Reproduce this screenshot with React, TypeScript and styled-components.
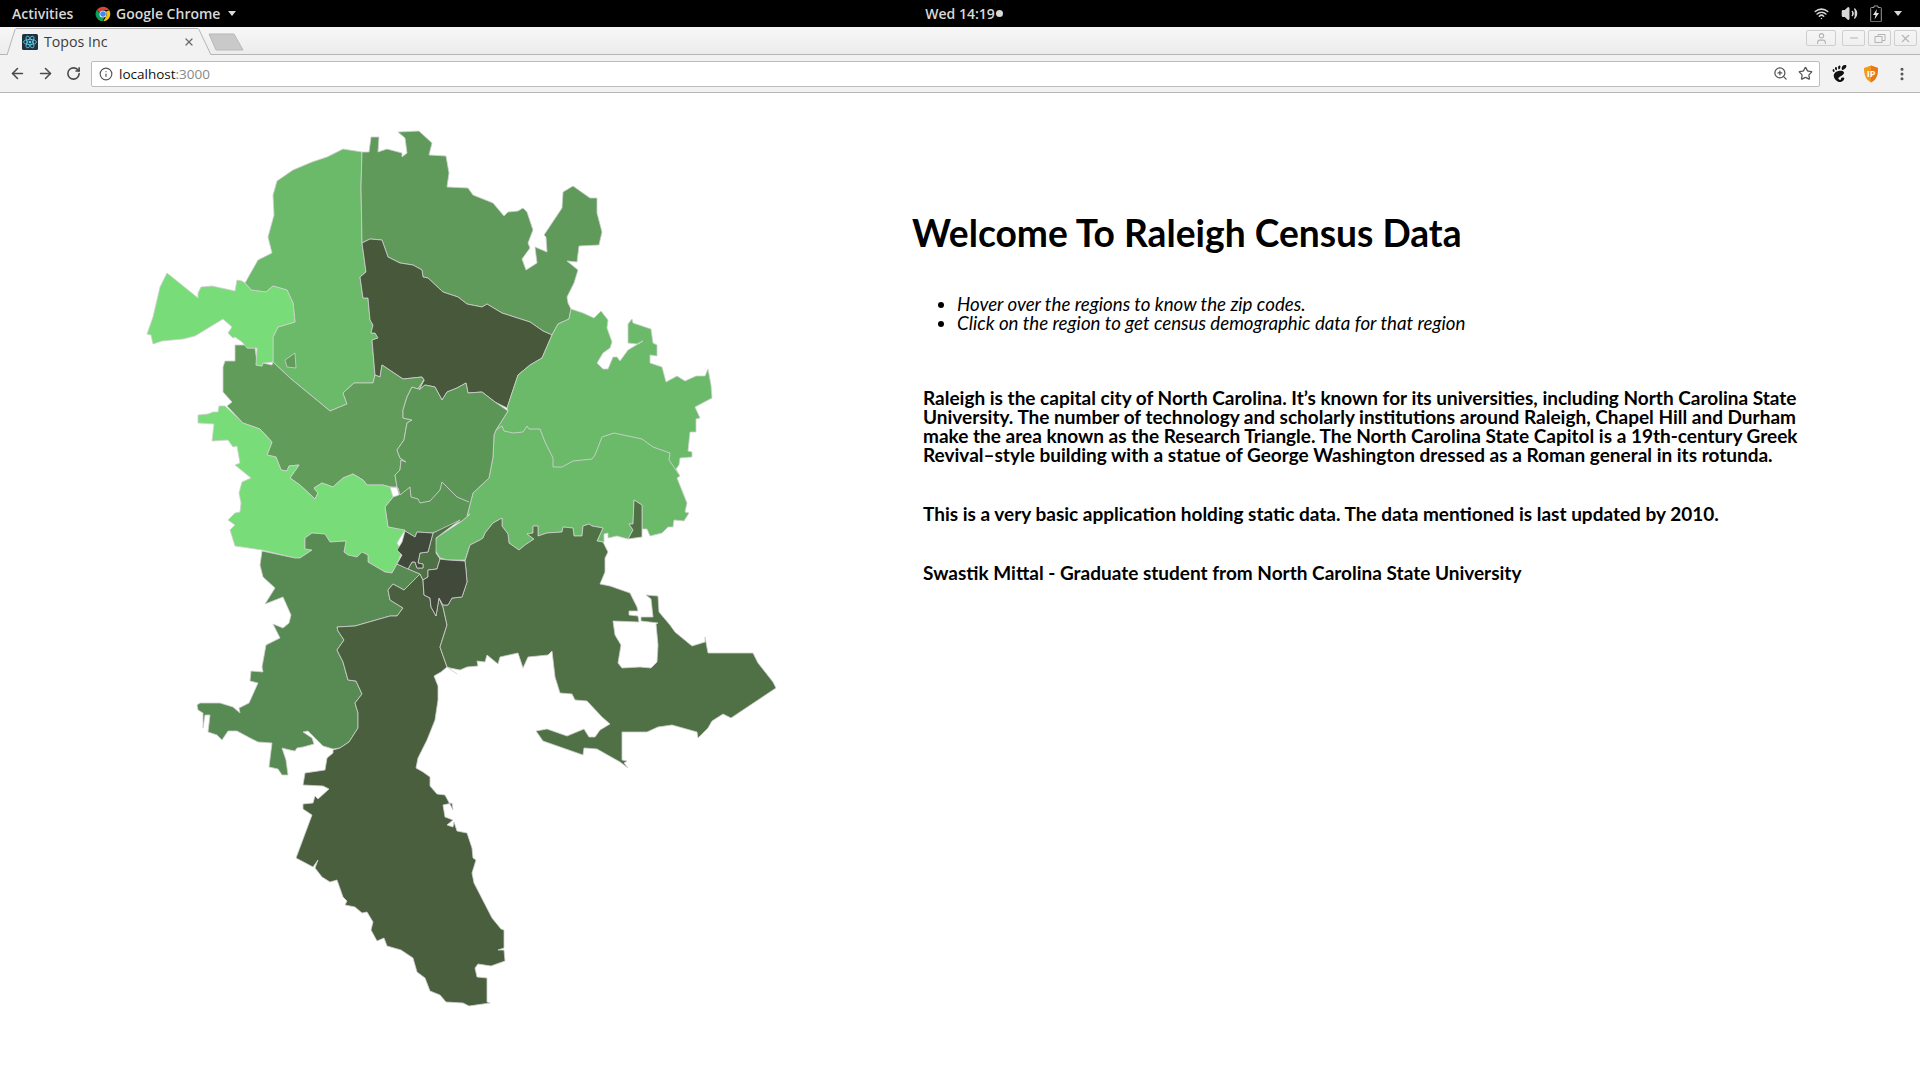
import styled, { createGlobalStyle } from "styled-components";
import {
  ArrowLeft,
  ArrowRight,
  RotateCw,
  Info,
  ZoomIn,
  Star,
  MoreVertical,
  Wifi,
  Volume2,
  X,
  Minus,
  User,
} from "lucide-react";
import { SiGnome } from "react-icons/si";

// region outlines, in page pixels (the svg viewBox starts right below the browser chrome)
const regions = [
  {
    zip: "27617",
    fill: "#6aba6a",
    points:
      "362,152 343,149 327,157 312,162 293,170 277,181 273,195 274,215 268,237 272,253 258,260 245,283 251,290 266,292 273,286 287,290 293,303 295,322 278,327 273,337 273,362 290,378 330,411 342,406 347,404 343,393 354,383 373,383 375,375 372,340 378,338 375,333 371,333 373,325 370,320 368,298 363,298 360,277 366,272 362,243 361,187",
  },
  {
    zip: "27614",
    fill: "#5f9a5a",
    points:
      "362,152 369,152 371,137 379,137 378,152 387,149 402,153 402,157 407,153 405,138 398,132 419,131 432,143 429,155 446,156 449,173 447,187 468,188 473,195 493,203 504,216 508,212 518,211 523,208 527,212 533,230 528,243 530,248 522,259 526,270 537,263 535,247 547,252 546,237 544,235 562,208 563,192 573,186 590,198 597,198 597,213 602,232 599,245 579,246 577,262 567,261 578,270 574,283 567,297 568,303 571,309 569,319 558,324 552,335 543,331 530,322 502,313 487,304 482,307 467,304 458,297 443,292 428,278 423,277 422,270 413,265 400,263 388,257 382,240 370,239 362,243 361,187",
  },
  {
    zip: "27615",
    fill: "#47593a",
    points:
      "362,243 370,239 382,240 388,257 400,263 413,265 422,270 423,277 428,278 443,292 458,297 467,304 482,307 487,304 502,313 530,322 543,331 552,335 542,358 530,365 518,375 507,408 495,402 482,392 468,393 466,383 457,388 447,392 442,400 435,387 425,385 419,390 424,380 422,377 403,379 382,365 380,377 375,375 372,340 378,338 375,333 371,333 373,325 370,320 368,298 363,298 360,277 366,272",
  },
  {
    zip: "27616",
    fill: "#6aba6a",
    points:
      "571,309 583,313 594,318 601,311 608,320 607,328 612,342 610,348 603,353 597,363 603,369 608,369 613,357 617,357 620,361 628,350 643,341 637,344 628,343 628,324 632,319 633,323 651,329 653,343 657,345 657,356 650,355 650,363 662,367 666,382 677,376 685,381 696,376 705,376 708,369 711,385 712,398 695,407 700,418 696,419 696,432 690,432 688,451 692,452 692,457 680,458 679,465 676,469 680,476 677,478 687,503 685,512 689,513 684,521 674,520 673,527 668,527 662,533 650,536 647,529 642,529 642,505 634,500 633,524 629,524 633,530 628,539 617,536 608,538 608,533 604,534 604,542 597,541 603,528 592,526 589,524 583,526 582,536 574,536 573,528 563,527 562,532 547,533 538,536 538,526 533,526 533,533 527,534 534,539 525,545 519,550 509,543 508,534 502,526 502,518 493,523 485,533 483,538 480,540 470,545 465,560 448,560 440,558 435,550 436,538 462,521 470,514 467,516 473,493 489,478 493,457 494,435 496,430 508,411 507,408 518,375 530,365 542,358 552,335 558,324 569,319",
  },
  {
    zip: "27604",
    fill: "#619c5b",
    points:
      "235,345 247,345 247,348 255,348 257,362 256,365 262,366 263,363 272,365 273,362 290,378 330,411 342,406 347,404 343,393 354,383 373,383 375,375 380,377 382,365 403,379 422,377 424,380 418,389 412,387 407,397 403,410 403,418 412,420 407,423 404,440 397,450 400,458 406,462 401,460 400,470 395,475 397,487 390,487 383,485 367,485 363,480 353,474 343,478 333,487 322,483 314,488 318,493 315,499 300,485 290,478 299,465 289,466 287,471 281,470 276,457 267,455 272,442 260,429 243,423 227,406 232,402 223,392 223,380 223,367 225,361 235,361",
  },
  {
    zip: "27613",
    fill: "#5c9657",
    points:
      "424,380 418,389 412,387 407,397 403,410 403,418 412,420 407,423 404,440 397,450 400,458 406,462 401,460 400,470 395,475 397,487 399,495 393,497 385,507 388,527 405,531 415,537 417,532 433,533 462,521 470,514 467,516 473,493 489,478 493,457 494,435 496,430 508,411 495,402 482,392 468,393 466,383 457,388 447,392 442,400 435,387 425,385 419,390",
  },
  {
    zip: "27612",
    fill: "#78dd78",
    points:
      "167,273 198,298 198,293 201,287 212,286 235,291 237,280 242,281 245,283 251,290 266,292 273,286 287,290 293,303 295,322 278,327 273,337 273,362 263,363 262,366 256,365 257,348 255,348 247,348 242,342 235,337 233,338 228,333 232,327 223,319 195,336 183,339 162,341 153,344 151,335 147,334 153,317 160,287",
  },
  {
    zip: "27607",
    fill: "#78dd78",
    points:
      "198,415 208,414 213,412 218,412 219,406 225,406 240,420 243,423 260,429 272,442 267,455 276,457 281,470 287,471 289,466 299,465 290,478 300,485 315,499 318,493 314,488 322,483 333,487 343,478 353,474 363,480 367,485 383,485 390,487 393,497 385,507 388,527 405,530 397,543 402,552 397,564 392,573 385,572 368,562 368,555 362,552 357,557 348,555 344,552 346,541 330,542 325,534 312,533 305,538 305,549 312,550 300,558 295,558 262,550 235,546 230,530 235,525 228,520 235,513 240,512 241,503 239,493 242,482 251,478 235,465 240,463 237,446 233,447 228,440 212,441 214,424 198,423",
  },
  {
    zip: "27606",
    fill: "#588a53",
    points:
      "262,551 260,565 263,577 275,588 265,604 283,597 291,615 289,623 283,628 273,624 280,638 266,645 262,667 263,672 251,671 250,681 258,683 249,703 239,708 240,713 233,707 220,703 200,703 197,705 198,710 203,713 203,728 205,715 210,715 208,732 217,735 222,740 228,731 237,731 250,738 258,742 272,743 269,767 278,769 282,775 288,775 286,760 282,748 290,750 295,751 297,748 303,747 314,744 312,738 303,732 308,731 323,746 333,749 340,748 349,742 358,728 358,713 355,703 362,694 356,681 348,680 343,662 337,650 344,640 338,631 337,627 355,626 390,616 397,616 403,608 390,600 388,590 393,584 404,590 420,574 397,564 392,573 385,572 368,562 368,555 362,552 357,557 348,555 344,552 346,541 330,542 325,534 312,533 305,538 305,549 312,550 300,558 295,558",
  },
  {
    zip: "27603",
    fill: "#4a5f3d",
    points:
      "420,574 404,590 393,584 388,590 390,600 403,608 397,616 390,616 355,626 337,627 338,631 344,640 337,650 343,662 348,680 356,681 362,694 355,703 358,713 358,728 349,742 340,748 333,750 333,753 327,758 325,770 305,773 303,785 323,786 329,789 318,799 315,796 313,803 303,804 303,809 312,815 296,858 313,867 318,860 315,868 322,877 330,882 337,880 343,897 347,901 345,905 355,907 362,913 367,912 373,922 371,930 377,941 384,938 387,946 401,950 413,958 417,972 425,978 430,991 440,995 446,1002 463,1003 469,1006 490,1003 487,1002 487,978 477,977 475,968 478,964 491,966 505,961 504,950 498,950 504,948 504,930 501,929 492,918 474,883 472,873 476,860 473,858 472,848 467,833 457,831 454,822 453,827 447,825 453,820 445,817 443,805 452,803 453,810 445,795 437,794 430,786 430,777 423,772 416,768 418,758 427,740 435,720 438,700 438,686 434,676 441,672 447,667 440,647 447,625 443,607 439,598 436,616 431,607 430,598 424,595 423,580",
  },
  {
    zip: "27610",
    fill: "#507146",
    points:
      "465,561 470,545 480,540 483,538 485,533 493,523 502,518 502,526 508,534 509,543 519,550 525,545 534,539 527,534 533,533 533,526 538,526 538,536 547,533 562,532 563,527 573,528 574,536 582,536 583,526 589,524 592,526 603,528 597,541 603,542 608,552 605,558 605,572 600,584 610,586 630,593 637,607 638,611 629,611 629,615 638,616 639,622 613,621 615,635 621,645 618,663 622,668 640,667 651,668 657,662 658,645 656,624 658,623 641,621 641,617 653,617 651,599 646,595 658,596 659,612 670,625 675,632 692,646 705,642 705,637 708,653 753,653 758,663 773,682 776,688 731,718 723,714 712,721 708,728 698,738 697,732 672,725 658,727 647,732 622,732 622,760 627,761 624,763 628,768 620,762 597,749 584,748 583,755 543,741 536,731 547,729 567,736 584,729 589,737 595,737 600,730 610,724 602,717 587,701 575,700 572,694 560,693 555,677 552,651 548,655 528,657 523,668 518,653 500,657 498,664 487,655 485,662 477,661 478,666 467,667 460,670 450,668 447,667 440,647 447,625 443,607 439,598 443,605 448,605 452,598 462,597 467,582 466,570",
  },
  {
    zip: "27610",
    fill: "#507146",
    points: "628,539 633,530 629,524 633,524 634,500 642,505 642,537",
  },
  {
    zip: "27601",
    fill: "#4f7045",
    points:
      "433,533 460,520 436,538 436,553 440,559 437,569 428,570 428,577 423,580 420,574 408,569 412,562 415,562 417,568 423,568 423,564 418,563 420,553 428,552",
  },
  {
    zip: "27605",
    fill: "#40493a",
    points:
      "405,531 415,537 417,532 433,533 428,552 420,553 418,563 423,564 423,568 417,568 415,562 412,562 408,569 397,564 402,555 397,550 402,542",
  },
  {
    zip: "27608",
    fill: "#40493a",
    points:
      "440,559 448,560 465,561 466,570 467,582 462,597 452,598 448,605 443,605 439,598 436,616 431,607 430,598 424,595 423,580 428,577 428,570 437,569",
  },
  {
    zip: "27609",
    fill: "#619c5b",
    points: "285,360 295,353 296,368 287,367",
  },
];

// borders between neighbouring regions of the same green
const borders = [
  "496,430 502,426 504,431 513,433 523,432 527,426 529,429 540,429 545,442 553,458 553,467 562,467 573,461 592,459 595,455 602,437 614,433 642,439 653,447 670,453 669,460 680,476",
  "390,487 398,488 400,495 410,487 411,497 418,499 420,503 430,501 440,490 442,482 457,497 469,502",
  "447,667 457,674",
];

const GlobalStyle = createGlobalStyle`
  html, body {
    margin: 0;
    height: 100%;
    overflow: hidden;
    background: #fff;
  }
`;

const Page = styled.div`
  display: flex;
  flex-direction: column;
  width: 1920px;
  height: 1080px;
`;

const TopBar = styled.div`
  display: grid;
  grid-template-columns: 1fr auto 1fr;
  align-items: center;
  height: 27px;
  background: #000;
  color: #d8d8d8;
  font-family: "Open Sans", sans-serif;
  font-size: 14px;
  font-weight: 600;
`;

const TopLeft = styled.div`
  display: flex;
  align-items: center;
  padding-left: 12px;
`;

const Activities = styled.span`
  width: 83px;
`;

const AppName = styled.span`
  margin: 0 8px 0 5px;
`;

const Caret = styled.span`
  width: 0;
  height: 0;
  border-left: 4.5px solid transparent;
  border-right: 4.5px solid transparent;
  border-top: 5px solid #d8d8d8;
`;

const Clock = styled.span`
  display: flex;
  align-items: center;
  gap: 1px;
  margin-left: 8px;
`;

const ClockDot = styled.span`
  width: 7px;
  height: 7px;
  border-radius: 50%;
  background: #d8d8d8;
`;

const TopRight = styled.div`
  display: flex;
  align-items: center;
  justify-content: flex-end;
  gap: 12px;
  padding-right: 18px;
`;

const TabRow = styled.div`
  display: flex;
  align-items: flex-end;
  justify-content: space-between;
  height: 28px;
  background: linear-gradient(#f7f7f7, #ececec);
  border-bottom: 1px solid #b5b5b5;
  box-sizing: border-box;
  padding-left: 7px;
`;

const Tabs = styled.div`
  display: flex;
  align-items: flex-end;
`;

const Tab = styled.div`
  position: relative;
  display: flex;
  align-items: center;
  width: 204px;
  height: 27px;
  margin-bottom: -1px;
  padding: 0 16px 0 15px;
  box-sizing: border-box;
  color: #3c3c3c;
  font-family: "Open Sans", sans-serif;
  font-size: 14.2px;
`;

const TabShape = styled.svg`
  position: absolute;
  left: 0;
  top: 0;
`;

const TabTitle = styled.span`
  position: relative;
  flex: 1;
  margin-left: 6px;
`;

const TabClose = styled.span`
  position: relative;
  display: flex;
  color: #6a6a6a;
`;

const Favicon = styled.svg`
  position: relative;
  display: block;
`;

const NewTab = styled.svg`
  display: block;
  margin: 0 0 3px -3px;
`;

const WindowButtons = styled.div`
  display: flex;
  align-self: flex-start;
  gap: 3px;
  padding: 3px 3px 0 0;
`;

const WindowButton = styled.div<{ $wide?: boolean }>`
  display: flex;
  align-items: center;
  justify-content: center;
  width: ${(p) => (p.$wide ? "30px" : "23px")};
  height: 16px;
  margin-right: ${(p) => (p.$wide ? "3px" : "0")};
  border: 1px solid #cfcfcf;
  border-radius: 2px;
  box-sizing: border-box;
  color: #b4b4b4;
`;

const Toolbar = styled.div`
  display: flex;
  align-items: center;
  height: 38px;
  background: #f2f2f2;
  border-bottom: 1px solid #b5b5b5;
  box-sizing: border-box;
  padding: 0 10px 0 3px;
`;

const NavButton = styled.span`
  display: flex;
  justify-content: center;
  width: 28px;
  color: #4a4a4a;
`;

const AddressBar = styled.div`
  flex: 1;
  display: flex;
  align-items: center;
  height: 26px;
  margin: 0 11px 0 4px;
  padding: 0 6px 0 7px;
  background: #fff;
  border: 1px solid #bdbdbd;
  border-radius: 2px;
  box-sizing: border-box;
  color: #555;
`;

const Url = styled.span`
  flex: 1;
  margin-left: 6px;
  font-family: "Open Sans", sans-serif;
  font-size: 13.5px;
  color: #111;
`;

const Port = styled.span`
  color: #888;
`;

const BarIcons = styled.div`
  display: flex;
  align-items: center;
  gap: 10px;
`;

const Extensions = styled.div`
  display: flex;
  align-items: center;
  gap: 15px;
  color: #111;
`;

const Main = styled.main`
  flex: 1;
  display: flex;
  min-height: 0;
`;

const MapPane = styled.div`
  flex: 0 0 912px;
`;

const MapSvg = styled.svg`
  display: block;
`;

const Region = styled.polygon`
  stroke: #cfcfcf;
  stroke-width: 0.8;
  stroke-linejoin: round;
  cursor: pointer;
`;

const Border = styled.polyline`
  fill: none;
  stroke: #cfcfcf;
  stroke-width: 0.9;
  stroke-linejoin: round;
`;

const TextPane = styled.div`
  flex: 1;
  padding-top: 122px;
  font-family: "Lato", sans-serif;
  color: #000;
`;

const Title = styled.h1`
  margin: 0;
  font-size: 37.2px;
  line-height: 36px;
  font-weight: 700;
`;

const Hints = styled.ul`
  margin: 44px 0 55px;
  padding-left: 45px;
  font-size: 18.7px;
  line-height: 19px;
  font-style: italic;
`;

const Paragraph = styled.p`
  margin: 0 0 40px 11px;
  width: 880px;
  font-size: 19px;
  line-height: 19px;
  font-weight: 700;
`;

function ChromeLogo() {
  return (
    <svg width="16" height="16" viewBox="0 0 24 24">
      <path d="M12 1a11 11 0 0 1 9.5 5.5H12a5.5 5.5 0 0 0-5.2 3.7L3.4 5A11 11 0 0 1 12 1z" fill="#db4437" />
      <path d="M21.5 6.5A11 11 0 0 1 12.5 23l4.2-7.5A5.5 5.5 0 0 0 16 8.500z" fill="#f4c20d" />
      <path d="M3.4 5l4.400 7.800a5.500 5.500 0 0 0 6 4.400L11.800 23A11 11 0 0 1 3.400 5z" fill="#0f9d58" />
      <circle cx="12" cy="12" r="5.300" fill="#fff" />
      <circle cx="12" cy="12" r="4.200" fill="#4285f4" />
    </svg>
  );
}

function ReactFavicon() {
  return (
    <Favicon width="16" height="16" viewBox="0 0 16 16">
      <rect width="16" height="16" rx="1.500" fill="#20323c" />
      <g fill="none" stroke="#5fd0ee" strokeWidth="0.800">
        <ellipse cx="8" cy="8" rx="6.500" ry="2.600" />
        <ellipse cx="8" cy="8" rx="6.500" ry="2.600" transform="rotate(60 8 8)" />
        <ellipse cx="8" cy="8" rx="6.500" ry="2.600" transform="rotate(120 8 8)" />
      </g>
      <circle cx="8" cy="8" r="1.300" fill="#5fd0ee" />
    </Favicon>
  );
}

function BatteryIcon() {
  return (
    <svg width="12" height="17" viewBox="0 0 12 17">
      <path d="M4 1h4v1.500h2.500a.8.8 0 0 1 .8.8V16a.8.800 0 0 1-.8.800h-9A.8.800 0 0 1 .7 16V3.300a.8.800 0 0 1 .8-.8H4z" fill="none" stroke="#9a9a9a" />
      <path d="M7 4L3 10h2.500L4.500 14.500 9 8H6.300z" fill="#e4e4e4" />
    </svg>
  );
}

function IpShield() {
  return (
    <svg width="16" height="18" viewBox="0 0 16 18">
      <path d="M8 0.500L15 3c0 7-1.500 11.500-7 14.500C2.500 14.500 1 10 1 3z" fill="#f39a1d" />
      <path d="M8 0.500L15 3c0 7-1.500 11.500-7 14.500z" fill="#e8791a" />
      <text x="8" y="12" textAnchor="middle" fontSize="9" fontWeight="700" fontFamily="Open Sans, sans-serif" fill="#fff">
        IP
      </text>
    </svg>
  );
}

export default function App() {
  return (
    <Page>
      <GlobalStyle />
      <TopBar>
        <TopLeft>
          <Activities>Activities</Activities>
          <ChromeLogo />
          <AppName>Google Chrome</AppName>
          <Caret />
        </TopLeft>
        <Clock>
          Wed 14:19
          <ClockDot />
        </Clock>
        <TopRight>
          <Wifi size={15} strokeWidth={2.5} />
          <Volume2 size={17} fill="#d8d8d8" />
          <BatteryIcon />
          <Caret />
        </TopRight>
      </TopBar>

      <TabRow>
        <Tabs>
          <Tab>
            <TabShape width="206" height="27" viewBox="0 0 206 27">
              <path d="M0 27L8 1.500Q8.500 .500 10 .500H190Q191.500 .500 192 1.500L204 27" fill="#f2f2f2" stroke="#b5b5b5" />
            </TabShape>
            <ReactFavicon />
            <TabTitle>Topos Inc</TabTitle>
            <TabClose>
              <X size={12} strokeWidth={2.5} />
            </TabClose>
          </Tab>
          <NewTab width="36" height="18" viewBox="0 0 36 18">
            <path d="M1 1H26L35 17H8z" fill="#c9c9c9" stroke="#b8b8b8" strokeLinejoin="round" />
          </NewTab>
        </Tabs>
        <WindowButtons>
          <WindowButton $wide>
            <User size={13} />
          </WindowButton>
          <WindowButton>
            <Minus size={12} />
          </WindowButton>
          <WindowButton>
            <svg width="12" height="11" viewBox="0 0 12 11" fill="none" stroke="currentColor">
              <rect x="1" y="3.500" width="7" height="6" />
              <path d="M4 3.500V1.500H11V7.500H8" />
            </svg>
          </WindowButton>
          <WindowButton>
            <X size={13} />
          </WindowButton>
        </WindowButtons>
      </TabRow>

      <Toolbar>
        <NavButton>
          <ArrowLeft size={17} strokeWidth={2.2} />
        </NavButton>
        <NavButton>
          <ArrowRight size={17} strokeWidth={2.2} />
        </NavButton>
        <NavButton>
          <RotateCw size={15} strokeWidth={2.5} />
        </NavButton>
        <AddressBar>
          <Info size={14} />
          <Url>
            localhost<Port>:3000</Port>
          </Url>
          <BarIcons>
            <ZoomIn size={15} />
            <Star size={15} />
          </BarIcons>
        </AddressBar>
        <Extensions>
          <SiGnome size={17} />
          <IpShield />
          <MoreVertical size={16} strokeWidth={2.6} color="#555" />
        </Extensions>
      </Toolbar>

      <Main>
        <MapPane>
          <MapSvg width="912" height="987" viewBox="0 93 912 987">
            {regions.map((r, i) => (
              <Region key={i} points={r.points} fill={r.fill}>
                <title>{r.zip}</title>
              </Region>
            ))}
            {borders.map((points, i) => (
              <Border key={i} points={points} />
            ))}
          </MapSvg>
        </MapPane>
        <TextPane>
          <Title>Welcome To Raleigh Census Data</Title>
          <Hints>
            <li>Hover over the regions to know the zip codes.</li>
            <li>Click on the region to get census demographic data for that region</li>
          </Hints>
          <Paragraph>
            Raleigh is the capital city of North Carolina. It’s known for its universities, including North Carolina
            State University. The number of technology and scholarly institutions around Raleigh, Chapel Hill and
            Durham make the area known as the Research Triangle. The North Carolina State Capitol is a 19th-century
            Greek Revival–style building with a statue of George Washington dressed as a Roman general in its rotunda.
          </Paragraph>
          <Paragraph>
            This is a very basic application holding static data. The data mentioned is last updated by 2010.
          </Paragraph>
          <Paragraph>Swastik Mittal - Graduate student from North Carolina State University</Paragraph>
        </TextPane>
      </Main>
    </Page>
  );
}
